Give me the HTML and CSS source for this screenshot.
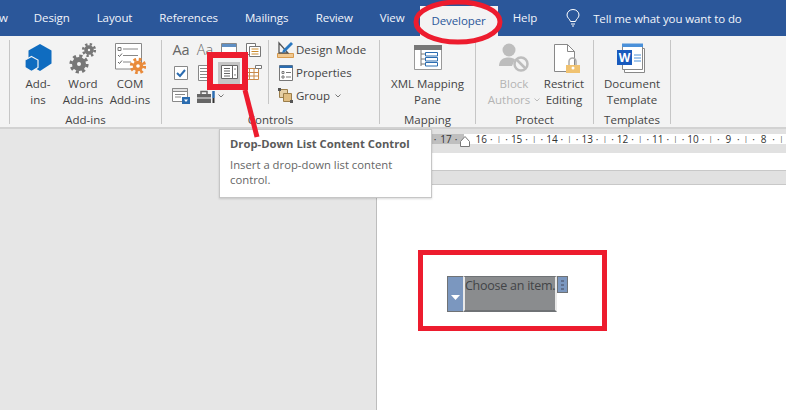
FILE: index.html
```html
<!DOCTYPE html>
<html lang="en">
<head>
<meta charset="utf-8">
<title>Developer tab</title>
<link rel="stylesheet" href="styles.css">
</head>
<body>
<div class="app">
  <header class="tabs">
    <span class="tab tab-cut">w</span>
    <span class="tab">Design</span>
    <span class="tab">Layout</span>
    <span class="tab">References</span>
    <span class="tab tab-mail">Mailings</span>
    <span class="tab">Review</span>
    <span class="tab">View</span>
    <span class="tab tab-active">Developer</span>
    <span class="tab tab-last">Help</span>
    <svg class="bulb" width="14" height="18" viewBox="0 0 14 18"><path d="M4.500 12.500C4 10 1 9 1 6a6 5.500 0 0 1 12 0c0 3-3 4-3.500 6.500zM5 15h4M6 17h2" fill="none" stroke="#fff" stroke-width="1"/></svg>
    <span class="tell">Tell me what you want to do</span>
  </header>

  <section class="ribbon">
    <div class="group g-addins">
      <div class="buttons">
        <div class="big w-a">
          <svg class="big-icon" width="32" height="32" viewBox="0 0 32 32"><path d="M18 2l11.500 6.500v13L18 29 6.500 22.500v-14z" fill="#0f6cc0"/><path d="M9.500 14.500l6.500 3.500v7.500L9.500 29.500 3 25.500V18z" fill="#0f6cc0" stroke="#f3f3f3" stroke-width="1.200"/></svg>
          <span class="lbl">Add-<br>ins</span>
        </div>
        <div class="big w-b">
          <svg class="big-icon" width="32" height="32" viewBox="0 0 32 32"><g fill="none" stroke="#777"><circle cx="12" cy="22" r="4.500" stroke-width="5"/><circle cx="12" cy="22" r="8" stroke-width="3.200" stroke-dasharray="3.140 3.140"/><circle cx="22" cy="8" r="3" stroke-width="3.600"/><circle cx="22" cy="8" r="5.800" stroke-width="2.600" stroke-dasharray="2.280 2.280"/></g></svg>
          <span class="lbl">Word<br>Add-ins</span>
        </div>
        <div class="big w-c">
          <svg class="big-icon" width="32" height="32" viewBox="0 0 32 32"><path d="M1.500 1.500h26v25.500h-26z" fill="#fff" stroke="#888"/><path d="M9 7h15M9 13.500h15M9 20h8" stroke="#888"/><path d="M4 5.500h3v3H4z" fill="none" stroke="#777"/><path d="M4 13l1.500 1.500 2.500-3M4 20l1.500 1.500 2.500-3" fill="none" stroke="#666"/><g fill="none" stroke="#e98a3a"><circle cx="24" cy="24" r="3.500" stroke-width="3.400"/><circle cx="24" cy="24" r="6.500" stroke-width="3.400" stroke-dasharray="2.550 2.550"/></g></svg>
          <span class="lbl">COM<br>Add-ins</span>
        </div>
      </div>
      <div class="group-name">Add-ins</div>
    </div>

    <div class="group g-controls">
      <div class="controls">
        <div class="tools">
          <span class="tool aa">Aa</span>
          <span class="tool aa aa-thin">Aa</span>
          <span class="tool"><svg width="16" height="20" viewBox="0 0 16 20"><path d="M.5 3.500h15v14H.5z" fill="#fff" stroke="#888"/><path d="M1 4h14v3H1z" fill="#5f8fc4"/></svg></span>
          <span class="tool"><svg width="18" height="20" viewBox="0 0 18 20"><path d="M2.500 3.500h9v11h-9z" fill="#fff" stroke="#777"/><path d="M5.500 6.500h11v10h-11z" fill="#fff" stroke="#777"/><path d="M7.500 9h7M7.500 11.500h7M7.500 14h7" stroke="#c98a2c"/></svg></span>
          <span class="tool"><svg width="20" height="20" viewBox="0 0 20 20"><path d="M3.500 3.500h13v13h-13z" fill="#fff" stroke="#888"/><path d="M6 10l3 3 5-6" fill="none" stroke="#2b6cb0" stroke-width="2"/></svg></span>
          <span class="tool"><svg width="20" height="20" viewBox="0 0 20 20"><path d="M3.500 2.500h13v15h-13z" fill="#fff" stroke="#888"/><path d="M5 5.500h10M5 8.500h10M5 11.500h10M5 14.500h10" stroke="#888"/></svg></span>
          <span class="tool tool-on"><svg width="17" height="14" viewBox="0 0 17 14"><path d="M.5.500h16v13H.5z" fill="#fff" stroke="#666"/><path d="M11.500.500v13M3 3.500h6M3 6h6M3 8.500h6M3 11h6" stroke="#666"/><path d="M13 4.500l1-1.500 1 1.500zM13 9.500l1 1.500 1-1.500z" fill="#555"/></svg></span>
          <span class="tool"><svg width="20" height="20" viewBox="0 0 20 20"><path d="M2.500 5.500h13v11h-13z" fill="#fff" stroke="#c98a4a"/><path d="M6.500 5.500v11M11 5.500v11M2.500 9.500h13M2.500 13h13" stroke="#c98a4a"/><path d="M12.500 2.500h6v3h-6z" fill="#fff" stroke="#777"/></svg></span>
          <span class="tool"><svg width="20" height="20" viewBox="0 0 20 20"><path d="M1.500 2.500h15v13h-15z" fill="#fff" stroke="#888"/><path d="M1.500 2.500h15v3h-15z" fill="#e2e2e2" stroke="#888"/><path d="M4 8.500h10M4 11h6" stroke="#888"/><path d="M11 11h8v7h-8z" fill="#2b6cb0"/><path d="M13 13.500h4l-2 2.500z" fill="#fff"/></svg></span>
          <span class="tool tool-wide"><svg width="19" height="20" viewBox="0 0 19 20"><path d="M0 8h14v9H0z" fill="#666"/><path d="M4 8V5.500h6V8" fill="none" stroke="#666" stroke-width="1.500"/><path d="M0 12h14" stroke="#f3f3f3"/><path d="M16.500 5v7" stroke="#2b6cb0" stroke-width="2.500"/><path d="M16.500 12v5" stroke="#333" stroke-width="2"/></svg><svg class="chev" width="6" height="4" viewBox="0 0 6 4"><path d="M.5.500L3 3 5.500.5" fill="none" stroke="#777"/></svg></span>
        </div>
        <div class="inner-sep"></div>
        <ul class="rows">
          <li class="row"><svg width="17" height="20" viewBox="0 0 17 20"><path d="M.5 13.500h16v4H.5z" fill="#f0c890" stroke="#d08a30" stroke-width=".8"/><path d="M2 3v10h9z" fill="none" stroke="#555" stroke-width="1.300"/><path d="M6 10l8-8 2 2-8 8-3 1z" fill="#2b78c0"/></svg>Design Mode</li>
          <li class="row"><svg width="17" height="20" viewBox="0 0 17 20"><path d="M2.500 2.500h13v15h-13z" fill="#fff" stroke="#777"/><path d="M2.500 2.500h13v2.500h-13z" fill="#2b6cb0"/><path d="M5 8.500h2v2H5zM5 13h2v2H5z" fill="none" stroke="#777"/><path d="M9 9.500h5M9 14h5" stroke="#777"/></svg>Properties</li>
          <li class="row"><svg width="17" height="20" viewBox="0 0 17 20"><path d="M2.500 3.500h8v8h-8z" fill="#e6cfa6" stroke="#9a7d4a"/><path d="M6.500 7.500h8v8h-8z" fill="#e0bd82" stroke="#9a7d4a"/><path d="M1 2h3v3H1zM13 14h3v3h-3z" fill="#555"/></svg>Group<svg class="chev-r" width="6" height="4" viewBox="0 0 6 4"><path d="M.5.500L3 3 5.500.5" fill="none" stroke="#777"/></svg></li>
        </ul>
      </div>
      <div class="group-name">Controls</div>
    </div>

    <div class="group g-mapping">
      <div class="buttons center">
        <div class="big w-xml">
          <svg class="big-icon" width="30" height="32" viewBox="0 0 30 32"><path d="M2.500 3.500h27v24h-27z" fill="#fff" stroke="#999"/><path d="M2 3h28v5H2z" fill="#777"/><path d="M9 8v16M9 12h4M9 17h4M9 22h4" stroke="#777"/><path d="M13.500 10.500h12v3.500h-12zM13.500 15.500h12v3.500h-12zM13.500 20.500h12v3.500h-12z" fill="#fff" stroke="#2b6cb0"/></svg>
          <span class="lbl">XML Mapping<br>Pane</span>
        </div>
      </div>
      <div class="group-name">Mapping</div>
    </div>

    <div class="group g-protect">
      <div class="buttons">
        <div class="big w-block disabled">
          <svg class="big-icon" width="32" height="32" viewBox="0 0 32 32"><circle cx="11" cy="8" r="6.500" fill="#bdbdbd"/><path d="M1 24c0-6 4-8.500 10-8.500 3 0 5 1 6 2l-3 6.500z" fill="#bdbdbd"/><circle cx="23" cy="22" r="6.500" fill="none" stroke="#bdbdbd" stroke-width="2.500"/><path d="M19 18l8 8" stroke="#bdbdbd" stroke-width="2.500"/></svg>
          <span class="lbl">Block<br>Authors<svg class="chev-l" width="6" height="4" viewBox="0 0 6 4"><path d="M.5.500L3 3 5.500.5" fill="none" stroke="#bbb"/></svg></span>
        </div>
        <div class="big w-restrict">
          <svg class="big-icon" width="32" height="32" viewBox="0 0 32 32"><path d="M6.500 2.500h13l7 7v20h-20z" fill="#fff" stroke="#888"/><path d="M19.500 2.500v7h7" fill="none" stroke="#888"/><path d="M21 23v-3.500a3.500 3.500 0 0 1 7 0V23" fill="none" stroke="#aaa" stroke-width="1.500"/><path d="M18 23h14v8H18z" fill="#f0c270"/><circle cx="25" cy="26" r="1.500" fill="#fff"/></svg>
          <span class="lbl">Restrict<br>Editing</span>
        </div>
      </div>
      <div class="group-name">Protect</div>
    </div>

    <div class="group g-templates">
      <div class="buttons center">
        <div class="big w-doc">
          <svg class="big-icon" width="30" height="32" viewBox="0 0 30 32"><path d="M7.500 6.500h20v24h-20z" fill="#fff" stroke="#888"/><path d="M5.500 3.500h20v24h-20z" fill="#fff" stroke="#888"/><path d="M5 1.500h21v3.500H5z" fill="#4a90d9"/><path d="M0 8h15v15H0z" fill="#185abd"/><text class="w-mark" x="7.500" y="19.500">W</text><path d="M17 13h7M17 16h7M17 19h7" stroke="#4a90d9"/></svg>
          <span class="lbl">Document<br>Template</span>
        </div>
      </div>
      <div class="group-name">Templates</div>
    </div>
  </section>

  <main class="workspace">
    <div class="gutter"></div>
    <div class="doc">
      <div class="ruler-band">
        <div class="ruler">
          <i class="lead">·</i>
          <span class="cell"><b>17</b><i>·</i><i></i><i></i></span>
          <span class="cell"><b>16</b><i>·</i><i>|</i><i>·</i></span>
          <span class="cell"><b>15</b><i>·</i><i>|</i><i>·</i></span>
          <span class="cell"><b>14</b><i>·</i><i>|</i><i>·</i></span>
          <span class="cell"><b>13</b><i>·</i><i>|</i><i>·</i></span>
          <span class="cell"><b>12</b><i>·</i><i>|</i><i>·</i></span>
          <span class="cell"><b>11</b><i>·</i><i>|</i><i>·</i></span>
          <span class="cell"><b>10</b><i>·</i><i>|</i><i>·</i></span>
          <span class="cell"><b>9</b><i>·</i><i>|</i><i>·</i></span>
          <span class="cell"><b>8</b><i>·</i><i>|</i></span>
        </div>
      </div>
      <div class="strip-white"></div>
      <div class="strip-gray"></div>
      <div class="page">
        <div class="cc">
          <div class="cc-drop"><svg width="9" height="5" viewBox="0 0 9 5"><path d="M0 0h9L4.500 5z" fill="#fff"/></svg></div>
          <div class="cc-body"><span class="cc-text">Choose an item.</span></div>
          <div class="cc-handle"><i></i><i></i><i></i></div>
        </div>
      </div>
    </div>
  </main>

  <svg class="indent" width="10" height="11" viewBox="0 0 10 11"><path d="M5 .5L9.500 5.500v5H.5v-5z" fill="#fff" stroke="#777"/></svg>

  <div class="tooltip">
    <div class="tip-title">Drop-Down List Content Control</div>
    <div class="tip-body">Insert a drop-down list content control.</div>
  </div>

  <svg class="annot" width="786" height="410" viewBox="0 0 786 410">
    <g fill="none" stroke="#ed1c2e">
      <ellipse cx="458" cy="22" rx="42" ry="20" stroke-width="5"/>
      <rect x="210" y="55" width="35" height="32" stroke-width="6"/>
      <path d="M245 90l12 47" stroke-width="5"/>
      <rect x="420.500" y="252.500" width="184" height="76" stroke-width="5"/>
    </g>
  </svg>
</div>
</body>
</html>
```
FILE: styles.css
```css
* { box-sizing: border-box; }
html, body { margin: 0; padding: 0; }
body { font-family: "Open Sans", "Noto Sans", sans-serif; color: #444; overflow: hidden; }
.app { position: relative; width: 786px; height: 410px; overflow: hidden; display: flex; flex-direction: column; background: #e6e6e6; }

.tabs { height: 36px; flex: none; background: #2b579a; color: #f2f5fa; display: flex; align-items: center; font-size: 11.500px; letter-spacing: -.1px; white-space: nowrap; }
.tab { margin-right: 27px; line-height: 16px; padding-top: 8px; padding-bottom: 8px; }
.tab-cut { margin-left: -1px; margin-right: 26px; }
.tab-mail { margin-right: 27.500px; }
.tab-active { background: #f3f3f3; color: #2b579a; margin: 6px 15px 0 -12px; padding: 7px 12px; height: 30px; }
.tab-last { margin-right: 29px; }
.bulb { flex: none; margin-right: 13px; }
.tell { font-size: 11.500px; }

.ribbon { height: 93px; flex: none; background: #f3f3f3; border-bottom: 2px solid #d2d2d2; padding: 4px 0 0 9px; display: flex; align-items: flex-start; font-size: 11.500px; }
.group { height: 84px; border-left: 1px solid #c6c6c6; display: flex; flex-direction: column; flex: none; }
.g-addins { width: 152px; padding-left: 5px; }
.g-controls { width: 218px; padding-left: 7px; }
.g-mapping { width: 96px; }
.g-protect { width: 118px; padding-left: 12px; }
.g-templates { width: 78px; border-right: 1px solid #c6c6c6; }

.buttons { display: flex; height: 68px; }
.buttons.center { justify-content: center; }
.big { display: flex; flex-direction: column; align-items: center; flex: none; text-align: center; }
.big-icon { display: block; height: 32px; margin: 2px 0; flex: none; }
.lbl { line-height: 16px; white-space: nowrap; }
.disabled { color: #b4b4b4; }
.w-a { width: 46px; }
.w-b { width: 44px; }
.w-c { width: 50px; }
.w-block { width: 52px; }
.w-restrict { width: 48px; }
.group-name { text-align: center; line-height: 16px; margin-top: 4px; margin-left: -5px; }
.g-controls .group-name { margin-left: -7px; }
.g-mapping .group-name, .g-templates .group-name { margin-left: 0; }
.g-protect .group-name { margin-left: -12px; }

.controls { display: flex; height: 68px; }
.tools { display: grid; grid-template-columns: repeat(4, 24px); grid-auto-rows: 23px; width: 96px; flex: none; }
.tool { display: flex; justify-content: center; align-items: flex-start; height: 23px; }
.tool-on { background: #c6c6c6; padding-top: 3px; margin-top: -1px; height: 24px; width: 22px; margin-left: 1px; }
.tool-wide { grid-column: span 2; justify-content: flex-start; padding-left: 4px; gap: 2px; }
.tool-wide .chev { margin-top: 8px; }
.aa { font-size: 14.500px; color: #666; line-height: 20px; }
.aa-thin { font-weight: 300; }
.inner-sep { width: 1px; height: 64px; background: #c6c6c6; margin-left: 3px; flex: none; }
.rows { list-style: none; margin: 0 0 0 8px; padding: 0; }
.row { display: flex; align-items: flex-start; height: 23px; line-height: 20px; gap: 2px; white-space: nowrap; }
.chev-r { margin-left: 3px; margin-top: 8px; }
.chev-l { margin-left: 4px; vertical-align: 2px; }
.w-mark { font: bold 12px "Open Sans", sans-serif; fill: #fff; text-anchor: middle; }

.workspace { flex: 1; display: flex; min-height: 0; }
.gutter { width: 376px; background: #e6e6e6; flex: none; }
.doc { flex: 1; border-left: 1px solid #bdbdbd; display: flex; flex-direction: column; min-width: 0; }
.ruler-band { height: 24px; background: #e1e1e1; padding: 5px 0 0 53px; flex: none; }
.ruler { height: 10px; background: linear-gradient(90deg, #bfbfbf 34px, #fff 34px); display: flex; font-size: 10px; line-height: 10px; color: #333; }
.lead { width: 10px; flex: none; font-style: normal; text-align: center; }
.cell { width: 35.300px; flex: none; display: flex; }
.cell b { width: 12px; font-weight: 400; text-align: center; flex: none; }
.cell i { width: 8px; font-style: normal; text-align: center; flex: none; }
.cell i:nth-of-type(2) { width: 7.300px; font-size: 7px; }
.strip-white { height: 18px; background: #fff; border-bottom: 1px solid #c8c8c8; flex: none; }
.strip-gray { height: 14px; background: #e1e1e1; border-bottom: 1px solid #c8c8c8; flex: none; }
.page { flex: 1; background: #fff; padding: 91px 0 0 70px; }
.indent { position: absolute; left: 460px; top: 136px; }

.cc { display: flex; align-items: flex-start; height: 36px; }
.cc-drop { width: 16px; height: 36px; background: #7b97bf; border: 1px solid #6f7275; border-right: 0; display: flex; justify-content: center; align-items: center; padding-top: 7px; flex: none; }
.cc-body { width: 94px; height: 36px; background: #8a8c8e; border: 1px solid #6f7275; border-left: 2px solid #e8e8e8; border-right: 2px solid #e8e8e8; border-bottom: 2px solid #6f7275; flex: none; }
.cc-text { display: block; font-family: "Open Sans", sans-serif; font-size: 12.500px; line-height: 18px; letter-spacing: -.25px; color: #424447; white-space: nowrap; }
.cc-handle { width: 11px; height: 17px; background: #7b97bf; border: 1px solid #6f7275; flex: none; display: flex; flex-direction: column; align-items: center; justify-content: center; gap: 2px; }
.cc-handle i { width: 3px; height: 2px; background: #5f6f8c; }

.tooltip { position: absolute; left: 219px; top: 129px; width: 213px; height: 69px; background: #fff; border: 1px solid #c6c6c6; box-shadow: 0 1px 2px rgba(0,0,0,.15); padding: 5px 10px; font-size: 11.300px; color: #666; }
.tip-title { font-weight: 700; color: #5a5a5a; line-height: 18px; margin-bottom: 4px; white-space: nowrap; font-size: 11.250px; }
.tip-body { line-height: 15px; }
.annot { position: absolute; left: 0; top: 0; pointer-events: none; }
```
